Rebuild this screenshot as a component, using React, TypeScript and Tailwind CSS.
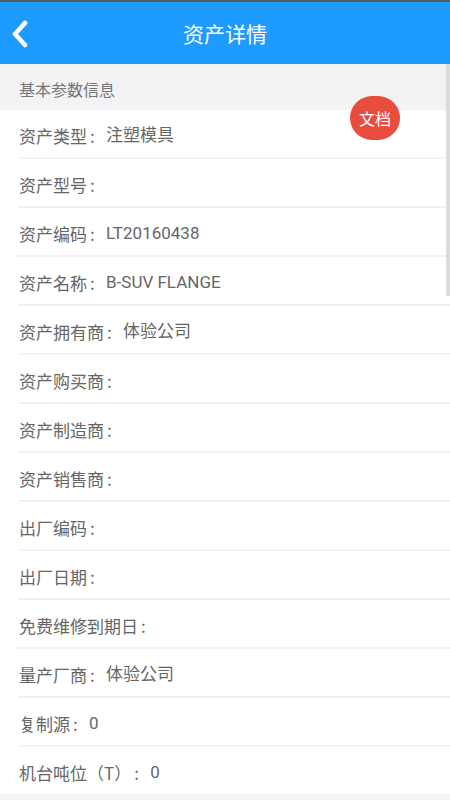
const rows: [string, string][] = [
  ["资产类型", "注塑模具"],
  ["资产型号", ""],
  ["资产编码", "LT20160438"],
  ["资产名称", "B-SUV FLANGE"],
  ["资产拥有商", "体验公司"],
  ["资产购买商", ""],
  ["资产制造商", ""],
  ["资产销售商", ""],
  ["出厂编码", ""],
  ["出厂日期", ""],
  ["免费维修到期日", ""],
  ["量产厂商", "体验公司"],
  ["复制源", "0"],
  ["机台吨位（T）", "0"],
];

function BackIcon() {
  return (
    <svg width="20" height="28" viewBox="0 0 20 28" className="absolute left-[10px] top-[18px]">
      <polyline points="15,3 5,14 15,25" fill="none" stroke="white" strokeWidth="4.5" strokeLinecap="round" strokeLinejoin="round" />
    </svg>
  );
}

export default function App() {
  return (
    <div
      className="relative w-[450px] h-[800px] overflow-hidden bg-white flex flex-col [text-spacing-trim:space-all]"
      style={{ fontFamily: '"Noto Sans CJK JP", sans-serif' }}
    >
      <div className="h-[2px] shrink-0 bg-[#555a60]" />
      <header className="relative h-[62px] shrink-0 bg-[#1e9bff] flex items-center justify-center">
        <BackIcon />
        <h1 className="text-white text-[21px] pt-[2px]">资产详情</h1>
      </header>
      <div className="h-[46px] shrink-0 bg-[#f3f3f6] flex items-center pl-[19px] pt-[4px] text-[16px] text-[#777]">
        基本参数信息
      </div>
      <div className="flex flex-col">
        {rows.map(([label, value]) => (
          <div key={label} className="h-[49px] shrink-0 ml-[18px] border-b-2 border-[#f2f2f4] flex items-center pl-[1px] pt-[4px] text-[17px] text-[#666]">
            <span>{label}</span>
            <span className="w-[19px] pl-[3px]">:</span>
            <span style={{ fontFamily: 'Roboto, "Noto Sans CJK JP", sans-serif' }}>{value}</span>
          </div>
        ))}
      </div>
      <div className="absolute left-0 right-0 bottom-0 h-[6px] bg-[#f3f3f6]" />
      <div className="absolute right-0 top-[64px] w-[4px] h-[232px] bg-[#dcdcde]" />
      <div className="absolute left-[350px] top-[96px] w-[50px] h-[44px] rounded-full bg-[#e84c3d] flex items-center justify-center text-white text-[16px]">
        文档
      </div>
    </div>
  );
}
